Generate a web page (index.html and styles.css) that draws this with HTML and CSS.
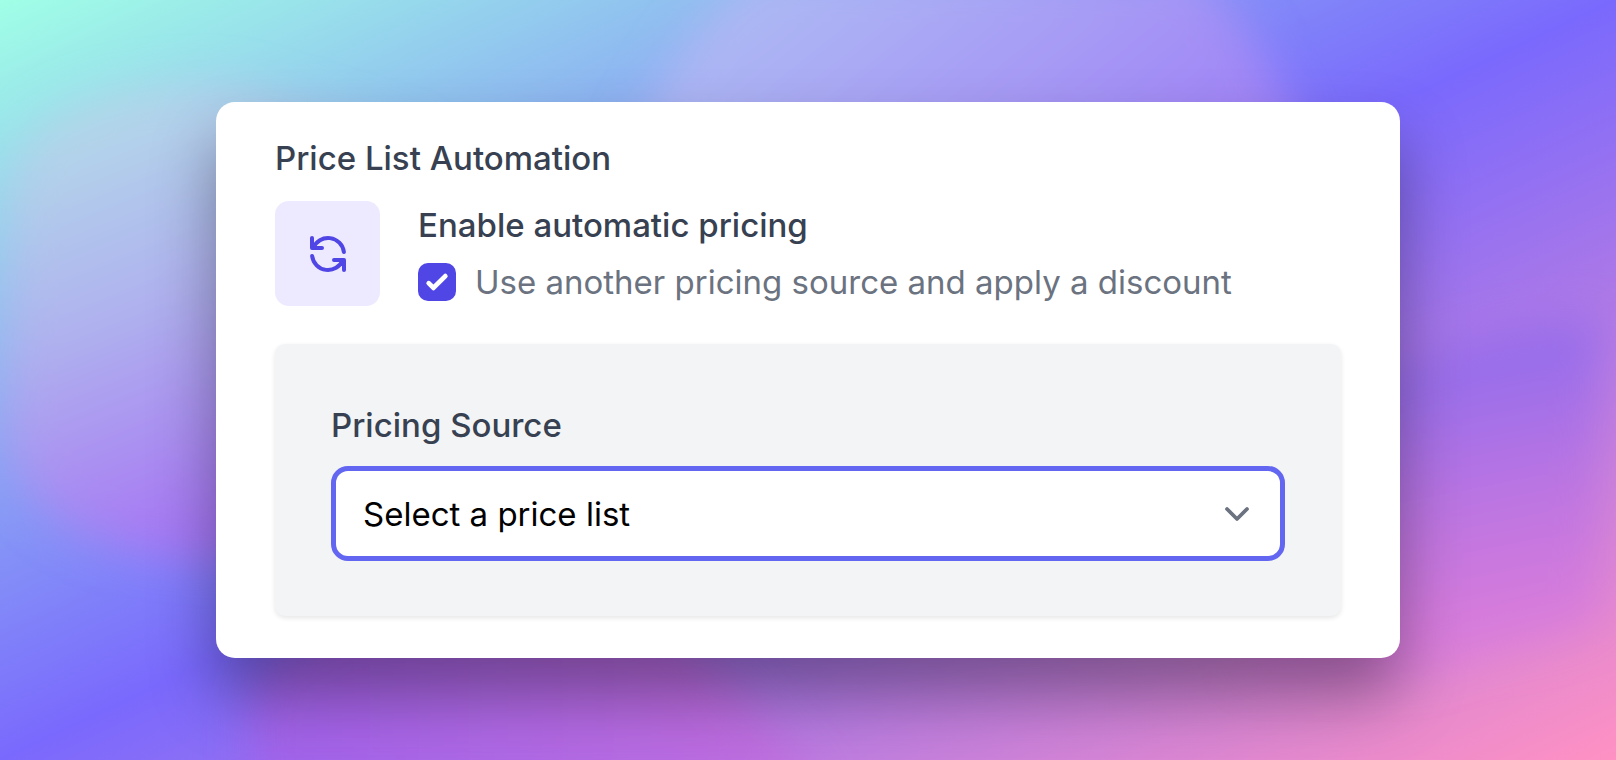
FILE: index.html
```
<!DOCTYPE html>
<html lang="en">
<head>
  <meta charset="utf-8">
  <meta name="viewport" content="width=device-width, initial-scale=1">
  <title>Price List Automation</title>
  <link rel="stylesheet" href="styles.css">
</head>
<body>
  <svg class="backdrop" viewBox="0 0 1616 760" preserveAspectRatio="none" aria-hidden="true">
    <defs>
      <filter id="soft" x="-30%" y="-30%" width="160%" height="160%"><feGaussianBlur stdDeviation="22"/></filter>
      <linearGradient id="left" x1="0" y1="0" x2="0.35" y2="1">
        <stop offset="0" stop-color="#b4e4e8"/>
        <stop offset="0.5" stop-color="#afb3ee"/>
        <stop offset="1" stop-color="#a673f4"/>
      </linearGradient>
      <linearGradient id="top" x1="0" y1="0" x2="1" y2="0.5">
        <stop offset="0" stop-color="#b0c6f3"/>
        <stop offset="1" stop-color="#a080f6"/>
      </linearGradient>
      <linearGradient id="bottom" x1="0" y1="0" x2="1" y2="0">
        <stop offset="0" stop-color="#a062ea"/>
        <stop offset="1" stop-color="#c26edd"/>
      </linearGradient>
      <linearGradient id="right" x1="0" y1="0" x2="0.2" y2="1">
        <stop offset="0" stop-color="#8a6bec"/>
        <stop offset="0.3" stop-color="#9b6eea"/>
        <stop offset="0.6" stop-color="#b974e2"/>
        <stop offset="1" stop-color="#da7cdb"/>
      </linearGradient>
    </defs>
    <g filter="url(#soft)">
      <path fill="url(#left)" d="M8 190C20 120 80 85 220 84C260 90 300 110 420 140V562H210C100 555 20 520 4 430Z"/>
      <path fill="url(#top)" d="M630 140C670 60 710 0 770 -30L1190 -30C1240 10 1275 70 1305 140V240H630Z"/>
      <path fill="url(#bottom)" d="M250 790V710C250 670 300 620 400 610H620C700 630 740 700 830 790Z"/>
      <path fill="url(#right)" d="M1250 410C1350 380 1500 318 1600 318V610C1600 636 1500 640 1420 670H1250Z"/>
    </g>
  </svg>

  <main class="page">
    <section class="card">
      <h1 class="heading">Price List Automation</h1>

      <div class="option">
        <div class="option-icon">
          <svg class="refresh" viewBox="0 0 24 24" aria-hidden="true">
            <path d="M4 4v5h.582m15.356 2A8.001 8.001 0 004.582 9m0 0H9m11 11v-5h-.581m0 0a8.003 8.003 0 01-15.357-2m15.357 2H15"/>
          </svg>
        </div>
        <div class="option-body">
          <h2 class="heading">Enable automatic pricing</h2>
          <label class="choice">
            <span class="tick">
              <input class="tick-input" type="checkbox" checked>
              <svg class="tick-mark" viewBox="0 0 16 16" aria-hidden="true">
                <path d="M12.207 4.793a1 1 0 010 1.414l-5 5a1 1 0 01-1.414 0l-2-2a1 1 0 011.414-1.414L6.5 9.086l4.293-4.293a1 1 0 011.414 0z"/>
              </svg>
            </span>
            <span>Use another pricing source and apply a discount</span>
          </label>
        </div>
      </div>

      <div class="panel">
        <label class="heading" for="source">Pricing Source</label>
        <div class="select">
          <select class="select-input" id="source">
            <option>Select a price list</option>
          </select>
          <svg class="chevron" viewBox="0 0 20 20" aria-hidden="true"><path d="M6 8l4 4 4-4"/></svg>
        </div>
      </div>
    </section>
  </main>
</body>
</html>
```
FILE: styles.css
```
*,
*::before,
*::after {
  box-sizing: border-box;
}

body {
  margin: 0;
  min-height: 100vh;
  position: relative;
  background: linear-gradient(to bottom right, #a0ffe6, #7a69fd 50%, #ff91c3);
  font-family: Inter, "Liberation Sans", sans-serif;
  font-size: 33px;
  line-height: 48px;
  color: #6b7280;
}

.backdrop {
  position: absolute;
  inset: 0;
  width: 100%;
  height: 100%;
}

.page {
  position: relative;
  min-height: 100vh;
  display: flex;
  align-items: center;
  padding: 40px 216px;
}

.card {
  flex: 1;
  padding: 32px 59px 42px;
  border-radius: 19px;
  background: #fff;
  box-shadow: 0 38px 64px rgba(0, 0, 0, 0.36);
}

.heading {
  display: block;
  margin: 0;
  font-size: 33px;
  font-weight: 500;
  color: #374151;
}

.option {
  display: flex;
  gap: 38px;
  margin-top: 19px;
}

.option-icon {
  flex: none;
  display: grid;
  place-items: center;
  width: 105px;
  height: 105px;
  border-radius: 14px;
  background: #ede9fe;
}

.refresh {
  width: 48px;
  height: 48px;
  fill: none;
  stroke: #4f46e5;
  stroke-width: 2;
  stroke-linecap: round;
  stroke-linejoin: round;
}

.option-body {
  display: flex;
  flex-direction: column;
  gap: 9px;
}

.choice {
  display: flex;
  align-items: center;
  gap: 19px;
}

.tick {
  display: grid;
  flex: none;
}

.tick-input,
.tick-mark {
  grid-area: 1 / 1;
  width: 38px;
  height: 38px;
}

.tick-input {
  appearance: none;
  margin: 0;
  border-radius: 10px;
  background: #4f46e5;
}

.tick-mark {
  fill: #fff;
  pointer-events: none;
  visibility: hidden;
}

.tick-input:checked + .tick-mark {
  visibility: visible;
}

.panel {
  margin-top: 38px;
  padding: 57px 56px 55px;
  border-radius: 10px;
  background: #f3f4f6;
  box-shadow: 0 2px 5px rgba(0, 0, 0, 0.1);
}

.select {
  display: grid;
  align-items: center;
  margin-top: 17px;
}

.select-input,
.chevron {
  grid-area: 1 / 1;
}

.select-input {
  appearance: none;
  width: 100%;
  height: 95px;
  padding: 0 84px 0 27px;
  border: 5px solid #6366f1;
  border-radius: 17px;
  background: #fff;
  font: inherit;
  color: #000;
}

.select-input:focus {
  outline: none;
}

.chevron {
  justify-self: end;
  width: 50px;
  height: 50px;
  margin-right: 23px;
  fill: none;
  stroke: #6b7280;
  stroke-width: 1.5;
  stroke-linecap: round;
  stroke-linejoin: round;
  pointer-events: none;
}
```
